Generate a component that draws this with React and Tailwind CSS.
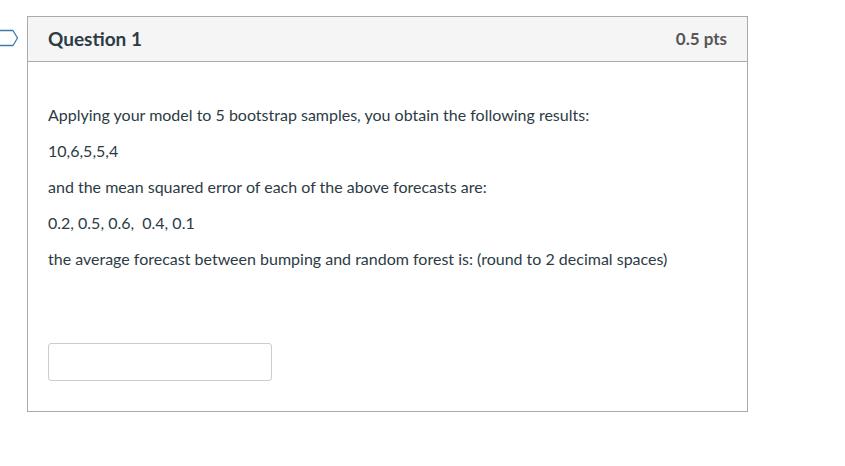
export default function App() {
  return (
    <div className="w-[845px] h-[466px] bg-white relative" style={{ fontFamily: "Lato, 'Open Sans', sans-serif" }}>
      <svg className="absolute left-0 top-[29px]" width="20" height="18" viewBox="0 0 20 18">
        <path d="M-2 1.5 H13 L17.5 9 L13 16.5 H-2" fill="none" stroke="#3b7bb0" strokeWidth="1.3" strokeLinejoin="round" />
      </svg>
      <div className="pt-4 pl-[27px]">
        <div className="w-[721px] border border-[#aaaaaa] bg-white">
          <div className="h-[45px] bg-[#f5f5f5] border-b border-[#aaaaaa] flex items-center justify-between pl-5 pr-5">
            <span className="text-[19px] font-bold text-[#2d3b45]">Question 1</span>
            <span className="text-[17px] font-bold text-[#565656]">0.5 pts</span>
          </div>
          <div className="pl-5 pt-[43px] pb-[30px] text-[16px] text-[#2d3b45]">
            <p className="leading-[20px]">Applying your model to 5 bootstrap samples, you obtain the following results:</p>
            <p className="leading-[20px] mt-4">10,6,5,5,4</p>
            <p className="leading-[20px] mt-4">and the mean squared error of each of the above forecasts are:</p>
            <p className="leading-[20px] mt-4">0.2, 0.5, 0.6,&nbsp; 0.4, 0.1</p>
            <p className="leading-[20px] mt-4">the average forecast between bumping and random forest is: (round to 2 decimal spaces)</p>
            <div className="mt-[74px] w-[224px] h-[38px] border border-[#c7cdd1] rounded-[3px] bg-white"></div>
          </div>
        </div>
      </div>
    </div>
  );
}
